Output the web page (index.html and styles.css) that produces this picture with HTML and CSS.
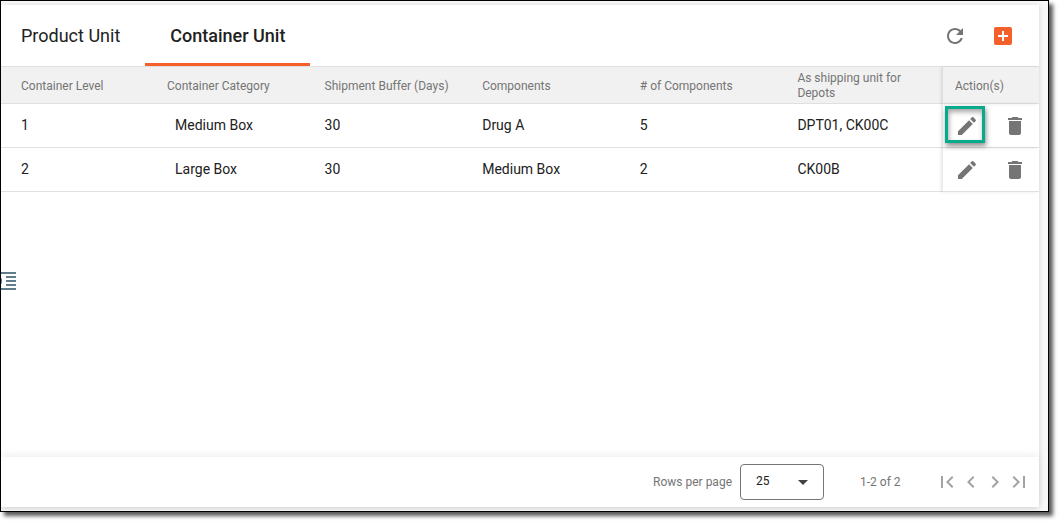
FILE: index.html
```html
<!DOCTYPE html>
<html lang="en">
<head>
    <meta charset="UTF-8">
    <meta name="viewport" content="width=device-width, initial-scale=1.0">
    <title>Container Unit</title>
    <link rel="stylesheet" href="styles.css">
</head>
<body>
    <!-- Shared icons -->
    <svg class="sprite" aria-hidden="true">
        <symbol id="icon-edit" viewBox="0 0 24 24">
            <path d="M3 17.25V21h3.75L17.81 9.94l-3.75-3.75L3 17.25zM20.71 7.04c.39-.39.39-1.02 0-1.41l-2.34-2.34c-.39-.39-1.02-.39-1.41 0l-1.83 1.83 3.75 3.75 1.83-1.83z"/>
        </symbol>
        <symbol id="icon-delete" viewBox="0 0 24 24">
            <path d="M6 19c0 1.1.9 2 2 2h8c1.1 0 2-.9 2-2V7H6v12zM19 4h-3.5l-1-1h-5l-1 1H5v2h14V4z"/>
        </symbol>
    </svg>

    <div class="window">
        <button type="button" class="side-toggle" aria-label="Expand menu">
            <svg viewBox="0 0 16 18" width="16" height="18">
                <path d="M0 0h15v2H0zM5 4h10v2H5zM5 8h10v2H5zM5 12h10v2H5zM0 16h15v2H0zM0 6l1 1v4l-1 1z"/>
            </svg>
        </button>

        <main class="card">
            <header class="toolbar">
                <nav class="tabs">
                    <a href="#product" class="tab">Product Unit</a>
                    <a href="#container" class="tab active">Container Unit</a>
                </nav>
                <div class="tools">
                    <button type="button" class="icon-btn" aria-label="Refresh">
                        <svg viewBox="0 0 24 24"><path d="M17.65 6.35C16.2 4.9 14.21 4 12 4c-4.42 0-7.99 3.58-7.99 8s3.57 8 7.99 8c3.73 0 6.84-2.55 7.73-6h-2.08c-.82 2.33-3.04 4-5.65 4-3.31 0-6-2.69-6-6s2.69-6 6-6c1.66 0 3.14.69 4.22 1.78L13 11h7V4l-2.35 2.35z"/></svg>
                    </button>
                    <button type="button" class="icon-btn add" aria-label="Add container unit">
                        <svg viewBox="0 0 24 24"><path d="M19 3H5c-1.11 0-2 .9-2 2v14c0 1.1.89 2 2 2h14c1.1 0 2-.9 2-2V5c0-1.1-.9-2-2-2zm-2 10h-4v4h-2v-4H7v-2h4V7h2v4h4v2z"/></svg>
                    </button>
                </div>
            </header>

            <div class="table-area">
                <table class="unit-table">
                    <thead>
                        <tr>
                            <th class="level">Container Level</th>
                            <th>Container Category</th>
                            <th>Shipment Buffer (Days)</th>
                            <th>Components</th>
                            <th># of Components</th>
                            <th>As shipping unit for Depots</th>
                            <th class="actions">Action(s)</th>
                        </tr>
                    </thead>
                    <tbody>
                        <tr>
                            <td class="level">1</td>
                            <td class="category">Medium Box</td>
                            <td>30</td>
                            <td>Drug A</td>
                            <td>5</td>
                            <td>DPT01, CK00C</td>
                            <td class="actions">
                                <div class="action-group">
                                    <button type="button" class="icon-btn highlighted" aria-label="Edit Medium Box"><svg><use href="#icon-edit"/></svg></button>
                                    <button type="button" class="icon-btn" aria-label="Delete Medium Box"><svg><use href="#icon-delete"/></svg></button>
                                </div>
                            </td>
                        </tr>
                        <tr>
                            <td class="level">2</td>
                            <td class="category">Large Box</td>
                            <td>30</td>
                            <td>Medium Box</td>
                            <td>2</td>
                            <td>CK00B</td>
                            <td class="actions">
                                <div class="action-group">
                                    <button type="button" class="icon-btn" aria-label="Edit Large Box"><svg><use href="#icon-edit"/></svg></button>
                                    <button type="button" class="icon-btn" aria-label="Delete Large Box"><svg><use href="#icon-delete"/></svg></button>
                                </div>
                            </td>
                        </tr>
                    </tbody>
                </table>
            </div>

            <footer class="paginator">
                <label for="pageSize">Rows per page</label>
                <div class="select-box">
                    <select id="pageSize">
                        <option>10</option>
                        <option selected>25</option>
                        <option>50</option>
                    </select>
                    <svg class="caret" viewBox="0 0 10 5" width="10" height="5"><path d="M0 0h10L5 5z"/></svg>
                </div>
                <span class="range">1-2 of 2</span>
                <div class="pages">
                    <button type="button" class="icon-btn" disabled aria-label="First page">
                        <svg viewBox="0 0 24 24"><path d="M18.41 16.59L13.82 12l4.59-4.59L17 6l-6 6 6 6zM6 6h2v12H6z"/></svg>
                    </button>
                    <button type="button" class="icon-btn" disabled aria-label="Previous page">
                        <svg viewBox="0 0 24 24"><path d="M15.41 7.41L14 6l-6 6 6 6 1.41-1.41L10.83 12z"/></svg>
                    </button>
                    <button type="button" class="icon-btn" disabled aria-label="Next page">
                        <svg viewBox="0 0 24 24"><path d="M10 6L8.59 7.41 13.17 12l-4.58 4.59L10 18l6-6z"/></svg>
                    </button>
                    <button type="button" class="icon-btn" disabled aria-label="Last page">
                        <svg viewBox="0 0 24 24"><path d="M5.59 7.41L10.18 12l-4.59 4.59L7 18l6-6-6-6zM16 6h2v12h-2z"/></svg>
                    </button>
                </div>
            </footer>
        </main>
    </div>
</body>
</html>
```
FILE: styles.css
```css
:root {
  --accent: #f55f2c;
  --text: #212121;
  --muted: #757575;
  --line: #e0e0e0;
  --highlight: #07ab8b;
}

*,
*::after {
  box-sizing: border-box;
}

body {
  margin: 0;
  padding: 0 12px 12px 0;
  height: 100vh;
  background: #fff;
  color: var(--text);
  font-family: Roboto, sans-serif;
  font-size: 14px;
}

.sprite {
  display: none;
}

.window {
  position: relative;
  display: flex;
  height: 100%;
  padding: 4px 9px 4px 0;
  border: 1px solid #000;
  background: #f8f8f8;
  box-shadow: 4px 4px 4px rgba(0, 0, 0, 0.65);
}

.card {
  display: flex;
  flex: 1;
  flex-direction: column;
  min-width: 0;
  background: #fff;
  box-shadow: 0 1px 6px rgba(0, 0, 0, 0.15);
}

.side-toggle {
  position: absolute;
  top: 271px;
  left: 0;
  padding: 0;
  border: none;
  background: none;
  line-height: 0;
  cursor: pointer;
}

.side-toggle svg {
  fill: #607d8b;
}

.toolbar {
  display: flex;
  justify-content: space-between;
  height: 62px;
  padding-right: 24px;
  border-bottom: 1px solid var(--line);
}

.tabs {
  display: flex;
}

.tab {
  display: flex;
  align-items: center;
  padding: 3px 25px 0;
  border-bottom: 3px solid transparent;
  color: var(--text);
  font-size: 18px;
  text-decoration: none;
}

.tab:first-child {
  padding-left: 20px;
}

.tab.active {
  border-bottom-color: var(--accent);
  font-weight: 500;
}

.tools {
  display: flex;
  align-items: center;
  gap: 24px;
}

.icon-btn {
  position: relative;
  width: 24px;
  height: 24px;
  padding: 0;
  border: none;
  background: none;
  line-height: 0;
  cursor: pointer;
}

.icon-btn svg {
  width: 24px;
  height: 24px;
  fill: var(--muted);
}

.icon-btn.add svg {
  fill: var(--accent);
}

.icon-btn:disabled {
  cursor: default;
}

.icon-btn:disabled svg {
  fill: #a3a3a3;
}

/* Frame around the button that is pointed out */
.icon-btn.highlighted::after {
  content: "";
  position: absolute;
  top: -8px;
  left: -10px;
  width: 40px;
  height: 37px;
  border: 3px solid var(--highlight);
  box-shadow: 1px 3px 5px rgba(0, 0, 0, 0.45), inset 1px 3px 5px rgba(0, 0, 0, 0.35);
}

.table-area {
  flex: 1;
}

.unit-table {
  width: 100%;
  table-layout: fixed;
  border-collapse: separate;
  border-spacing: 0;
}

.unit-table th,
.unit-table td {
  padding: 0 12px;
  border-bottom: 1px solid var(--line);
  text-align: left;
  vertical-align: middle;
}

.unit-table th {
  height: 37px;
  padding-top: 2px;
  background: #f1f1f1;
  color: var(--muted);
  font-size: 12px;
  font-weight: 400;
  line-height: 15px;
}

.unit-table td {
  height: 44px;
  padding-bottom: 2px;
}

.unit-table .level {
  width: 154px;
  padding-left: 20px;
}

.unit-table .category {
  padding-left: 20px;
}

.unit-table .actions {
  width: 96px;
  box-shadow: -2px 0 3px rgba(0, 0, 0, 0.1);
}

.unit-table td.actions {
  padding-bottom: 0;
}

.action-group {
  display: flex;
  gap: 24px;
}

.paginator {
  display: flex;
  align-items: center;
  justify-content: flex-end;
  height: 50px;
  padding-right: 8px;
  box-shadow: 0 -2px 8px rgba(0, 0, 0, 0.07);
  color: var(--muted);
  font-size: 12px;
}

.select-box {
  position: relative;
  width: 84px;
  margin: 0 36px 0 8px;
}

.select-box select {
  width: 100%;
  height: 36px;
  padding: 0 15px 3px;
  border: 1px solid #757575;
  border-radius: 4px;
  appearance: none;
  background: #fff;
  color: var(--text);
  font-family: inherit;
  font-size: 12px;
}

.caret {
  position: absolute;
  top: 16px;
  right: 16px;
  fill: #424242;
  pointer-events: none;
}

.range {
  min-width: 43px;
}

.pages {
  display: flex;
  margin-left: 32px;
}
```
